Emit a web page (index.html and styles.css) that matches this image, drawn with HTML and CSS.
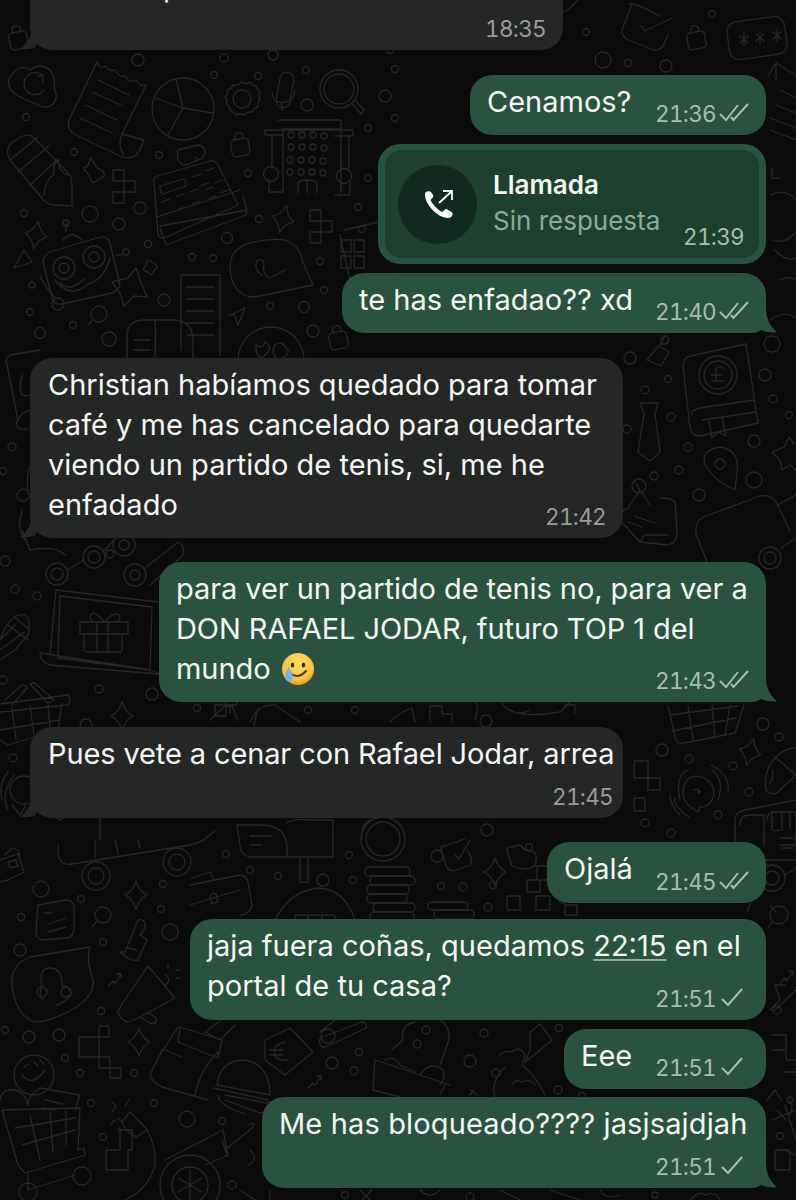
FILE: index.html
```html
<!DOCTYPE html>
<html lang="es">
  <head>
    <meta charset="utf-8" />
    <meta name="viewport" content="width=device-width, initial-scale=1" />
    <title>Chat</title>
    <link rel="stylesheet" href="styles.css">
  </head>

  <body>
    <!-- wallpaper doodles, free canvas behind the chat -->
    <svg class="doodles" width="796" height="1200" viewBox="0 0 796 1200" fill="none" stroke-linecap="round" stroke-linejoin="round">
      <defs>
        <path id="sparkle" d="M0 -14 Q3 -4 11 0 Q3 4 0 14 Q-3 4 -11 0 Q-3 -4 0 -14Z" />
        <g id="lock"><rect x="-9" y="-6" width="18" height="17" rx="4" /><path d="M-4 -6 V-10 A4.5 4.5 0 0 1 4 -10 V-6" /></g>
        <g id="squares"><path d="M0 0 h11 v11 h-11z M11 11 h11 v11 h-11z M11 22 h-11 v11 h11z" /></g>
        <path id="spark" d="M0 8 L5 3 L7 6 L13 -4 M9 -4 H13 V0" />
      </defs>

      <!-- small circles -->
      <g class="dots">
        <circle cx="138" cy="60" r="6" /><circle cx="224" cy="58" r="4" /><circle cx="273" cy="55" r="5" /><circle cx="214" cy="75" r="3.5" /><circle cx="258" cy="76" r="3.5" /><circle cx="306" cy="70" r="3.5" /><circle cx="395" cy="69" r="3.5" /><circle cx="307" cy="105" r="6" /><circle cx="385" cy="96" r="6" /><circle cx="26" cy="117" r="3.5" /><circle cx="368" cy="128" r="3.5" /><circle cx="74" cy="152" r="3.5" /><circle cx="159" cy="155" r="3.5" /><circle cx="248" cy="173" r="3.5" /><circle cx="368" cy="178" r="3.5" /><circle cx="140" cy="208" r="6" /><circle cx="90" cy="214" r="8" /><circle cx="24" cy="213" r="3.5" /><circle cx="119" cy="224" r="6" /><circle cx="259" cy="219" r="3.5" /><circle cx="358" cy="207" r="3.5" /><circle cx="227" cy="238" r="5.5" /><circle cx="148" cy="244" r="3.5" /><circle cx="192" cy="257" r="3.5" /><circle cx="213" cy="258" r="3.5" /><circle cx="320" cy="261" r="3.5" /><circle cx="324" cy="290" r="3.5" /><circle cx="270" cy="306" r="3.5" /><circle cx="304" cy="307" r="5.5" /><circle cx="164" cy="300" r="6" /><circle cx="73" cy="325" r="3.5" /><circle cx="30" cy="312" r="3.5" /><circle cx="40" cy="333" r="5.5" /><circle cx="109" cy="339" r="7" /><circle cx="313" cy="331" r="6" />
        <circle cx="586" cy="32" r="3.5" /><circle cx="603" cy="60" r="8" /><circle cx="628" cy="63" r="3.5" /><circle cx="666" cy="66" r="6" /><circle cx="712" cy="14" r="3.5" /><circle cx="390" cy="50" r="3.5" /><circle cx="395" cy="118" r="3.5" />
        <circle cx="630" cy="358" r="6" /><circle cx="668" cy="379" r="3.5" /><circle cx="645" cy="390" r="4" /><circle cx="671" cy="417" r="4" /><circle cx="627" cy="429" r="4" /><circle cx="688" cy="447" r="4" /><circle cx="679" cy="470" r="4" /><circle cx="654" cy="476" r="4" /><circle cx="699" cy="495" r="6" /><circle cx="765" cy="375" r="6" /><circle cx="773" cy="399" r="4" /><circle cx="789" cy="415" r="3.5" /><circle cx="754" cy="441" r="6" /><circle cx="754" cy="480" r="8" />
        <circle cx="12" cy="447" r="4" /><circle cx="3" cy="471" r="3.5" /><circle cx="23" cy="495" r="6" />
        <circle cx="110" cy="554" r="4" /><circle cx="5" cy="561" r="5" /><circle cx="15" cy="589" r="4" /><circle cx="37" cy="596" r="4" /><circle cx="99" cy="689" r="4" /><circle cx="152" cy="694" r="6" /><circle cx="86" cy="725" r="6" /><circle cx="3" cy="680" r="4" /><circle cx="13" cy="758" r="4" />
        <circle cx="197" cy="708" r="3.5" /><circle cx="308" cy="710" r="3.5" /><circle cx="355" cy="710" r="3.5" /><circle cx="486" cy="721" r="6" />
        <circle cx="226" cy="854" r="3.5" /><circle cx="349" cy="855" r="3.5" /><circle cx="250" cy="870" r="3.5" /><circle cx="278" cy="876" r="3.5" /><circle cx="323" cy="880" r="6" /><circle cx="353" cy="880" r="3.5" /><circle cx="437" cy="856" r="6" /><circle cx="441" cy="886" r="3.5" /><circle cx="493" cy="885" r="3.5" /><circle cx="463" cy="887" r="4" /><circle cx="487" cy="830" r="6" /><circle cx="529" cy="847" r="3.5" /><circle cx="488" cy="907" r="4" /><circle cx="563" cy="900" r="3.5" />
        <circle cx="662" cy="750" r="6" /><circle cx="689" cy="759" r="4" /><circle cx="733" cy="766" r="4" /><circle cx="779" cy="737" r="4" /><circle cx="763" cy="724" r="6" /><circle cx="749" cy="792" r="4" /><circle cx="718" cy="815" r="4" /><circle cx="645" cy="823" r="4" /><circle cx="671" cy="833" r="4" />
        <circle cx="41" cy="889" r="8" /><circle cx="81" cy="899" r="3.5" /><circle cx="21" cy="917" r="3.5" /><circle cx="163" cy="884" r="3.5" /><circle cx="161" cy="909" r="3.5" /><circle cx="103" cy="942" r="3.5" /><circle cx="20" cy="950" r="6" /><circle cx="170" cy="932" r="8" /><circle cx="101" cy="1011" r="3.5" /><circle cx="5" cy="1030" r="3.5" /><circle cx="29" cy="1037" r="6" /><circle cx="59" cy="1035" r="6" /><circle cx="65" cy="1058" r="3.5" /><circle cx="80" cy="1073" r="3.5" /><circle cx="134" cy="1073" r="3.5" /><circle cx="91" cy="1103" r="3.5" /><circle cx="103" cy="1137" r="3.5" /><circle cx="154" cy="1103" r="3.5" /><circle cx="187" cy="1119" r="8" /><circle cx="222" cy="1121" r="3.5" /><circle cx="232" cy="1185" r="4" />
        <circle cx="332" cy="1063" r="6" /><circle cx="354" cy="1071" r="4" /><circle cx="359" cy="1052" r="3.5" /><circle cx="470" cy="1061" r="6" /><circle cx="484" cy="1033" r="4" /><circle cx="496" cy="1073" r="4" /><circle cx="582" cy="1096" r="3.5" /><circle cx="558" cy="1090" r="4" /><circle cx="559" cy="1028" r="3.5" /><circle cx="777" cy="1010" r="4" /><circle cx="780" cy="1136" r="3.5" /><circle cx="790" cy="1100" r="3" />
      </g>

      <!-- cloud with refresh -->
      <path d="M12 91 Q4 82 14 72 Q22 64 30 70 Q40 62 50 70 Q56 78 54 88 Q60 100 50 106 Q44 109 36 104 L20 97 Q16 95 12 91Z M43 76 A11 11 0 1 0 44 90 M43 76 V83 M43 76 H37" />
      <!-- receipt -->
      <path d="M97 62 L70 118 Q65 129 76 135 L122 157 Q136 161 141 147 L144 140 L122 134 Q117 146 124 155 M146 85 L122 134 M97 62 Q100 70 105 66 Q110 72 115 70 Q120 78 125 76 Q130 84 136 80 Q140 87 146 85 M98 80 L129 95 M92 92 L123 106 M85 105 L117 120 M80 118 L112 133" />
      <!-- pie -->
      <circle cx="183" cy="109" r="31" /><path d="M183 108 L176 79 M183 108 L155 98 M183 108 L213 113 M183 108 L168 135" />
      <!-- gear -->
      <path d="M242 82 Q246 85 250 82 Q252 86 256 86 Q257 90 260 92 Q258 96 260 100 Q257 103 258 107 Q254 108 252 112 Q248 111 244 115 Q240 113 236 115 Q234 112 230 110 Q230 106 226 104 Q228 100 225 97 Q228 94 227 90 Q232 89 233 85 Q238 86 242 82Z" /><circle cx="242" cy="99" r="9" />
      <!-- mic -->
      <rect x="-7" y="-18" width="14" height="36" rx="7" transform="translate(285 90) rotate(10)" /><path d="M272 92 Q274 105 285 102 Q295 100 295 90 M282 102 L282 110" />
      <!-- magnifier -->
      <circle cx="339" cy="89" r="19" /><circle cx="339" cy="89" r="15" /><path d="M352 103 L361 114 Q364 112 364 110 L355 100" />
      <!-- hotel -->
      <path d="M283 193 V129 H341 V193 M278 122 Q278 120 280 120 H340 Q342 120 341 125 Q341 129 338 129 H283 M283 135 H265 V130 H353 V136 H335 M272 136 V168 M349 136 V168 M269 180 V192 H283 M350 180 V195 H335 M298 193 V182 Q306 178 317 182 V193 M307 180 V193" />
      <circle cx="271" cy="174" r="7.5" /><circle cx="344" cy="176" r="7.5" />
      <g class="dots">
        <circle cx="291" cy="135" r="3" /><circle cx="302" cy="135" r="3" /><circle cx="313" cy="135" r="3" /><circle cx="324" cy="136" r="3" /><circle cx="291" cy="147" r="3" /><circle cx="302" cy="147" r="3" /><circle cx="313" cy="147" r="3" /><circle cx="324" cy="148" r="3" /><circle cx="290" cy="160" r="3" /><circle cx="301" cy="160" r="3" /><circle cx="312" cy="160" r="3" /><circle cx="323" cy="161" r="3" /><circle cx="290" cy="172" r="3" /><circle cx="301" cy="172" r="3" /><circle cx="312" cy="172" r="3" /><circle cx="323" cy="173" r="3" />
      </g>
      <!-- pencil -->
      <path d="M10 160 Q4 150 12 142 L23 136 Q30 133 36 140 L70 175 Q72 178 72 190 L72 206 L54 205 Q46 204 42 198 L10 160Z M10 160 L38 137 M18 172 L50 145 M30 185 L58 159 M58 159 Q52 165 54 175 Q46 178 44 195 M70 175 Q60 176 58 159" />
      <!-- locks -->
      <use href="#lock" transform="translate(240 145) rotate(-8)" /><use href="#lock" transform="translate(18 38) rotate(-12)" /><use href="#lock" transform="translate(338 338) rotate(-10)" /><use href="#lock" transform="translate(696 38) rotate(-10)" />
      <!-- perfume bottle -->
      <path d="M90 158 Q94 162 97 168 Q106 172 104 176 L93 183 L88 174 Q84 170 84 168 Q90 166 90 158Z" />
      <use href="#squares" transform="translate(113 170)" />
      <use href="#squares" transform="translate(310 210)" />
      <!-- register -->
      <path d="M154 183 Q152 178 158 176 L210 161 Q216 160 218 165 L238 205 L164 238 Q158 238 158 234 Z M157 217 L240 190 M160 226 L247 210 M160 228 L166 245 L246 215 Q248 211 243 197 M198 161 L196 157 M178 150 L198 145 Q204 145 205 152 Q205 158 198 160 L186 165 Q180 165 178 159 Q177 153 178 150Z" />
      <path d="M160 186 L183 179 Q186 180 186 186 L163 194 Q160 193 160 186Z M192 177 l9 -3 M205 171 l9 -3 M200 186 l9 -3 M214 183 l8 -3 M161 202 l9 -3 M176 197 l8 -3 M190 192 l8 -3 M205 190 l8 -3 M220 193 l8 -3 M162 215 l9 -3 M177 210 l8 -3 M192 204 l8 -3 M208 199 l8 -3 M223 192 l8 -3" />
      <!-- sparkles -->
      <use href="#sparkle" transform="translate(36 235) rotate(10)" /><use href="#sparkle" transform="translate(283 219) rotate(15)" /><use href="#sparkle" transform="translate(122 716)" /><use href="#sparkle" transform="translate(495 872)" /><use href="#sparkle" transform="translate(750 752) rotate(15)" /><use href="#sparkle" transform="translate(136 895)" /><use href="#sparkle" transform="translate(139 1042)" />
      <!-- robot -->
      <path d="M43 262 Q43 256 50 252 L100 237 Q108 236 110 243 L120 285 Q118 290 112 293 L62 304 Q54 305 52 298 Z M63 240 Q72 230 82 240 M66 232 V224" />
      <circle cx="64" cy="268" r="11" /><circle cx="64" cy="268" r="5" /><circle cx="94" cy="257" r="11" /><circle cx="94" cy="257" r="5" /><circle cx="58" cy="304" r="6" /><circle cx="66" cy="223" r="3" /><circle cx="126" cy="252" r="3" /><circle cx="32" cy="285" r="3" />
      <path d="M55 280 Q70 300 88 284 Q104 280 110 258 M60 283 Q70 293 84 279 M40 276 Q44 285 55 298 M116 255 H122" />
      <!-- star, triangle -->
      <path d="M112 282 L128 278 L136 268 L140 280 L147 297 L134 296 L124 306 L120 293 Z M24 250 L32 262 L14 268 Z M152 262 Q146 258 146 266 Q140 270 148 272 Q152 278 154 270 Q160 268 155 264 Z" />
      <!-- document roll -->
      <path d="M181 350 V275 H220 V355 M187 287 H214 M187 299 H214 M187 311 H214 M187 323 H214 M187 335 H214 M127 358 V336 Q127 320 145 320 H175 Q195 322 193 345 V358 M155 320 Q156 330 155 358 M134 340 H150 M134 350 H150" />
      <!-- magnifier small -->
      <circle cx="99" cy="314" r="8" /><path d="M92 321 L88 325" />
      <!-- signature bubble -->
      <path d="M230 268 Q230 248 250 243 Q270 238 285 240 Q300 245 302 260 L313 285 L255 297 Q232 297 230 268Z M262 275 Q252 268 258 260 Q264 258 264 265 Q262 275 270 278 L285 270" />
      <!-- paper plane, coffee face -->
      <path d="M228 316 L245 308 L238 325 L234 314Z" />
      <circle cx="271" cy="360" r="33" /><path d="M256 345 Q262 350 265 342 Q272 346 268 352 L262 358 Q255 355 256 345Z M275 345 Q282 340 285 347 Q291 350 286 356 L278 360 Q270 354 275 345Z" />
      <!-- top right: envelope tick, password box -->
      <path d="M629 4 Q634 2 660 16 M632 4 L622 30 Q621 36 628 40 L654 50 Q660 50 663 46 L668 34 M641 26 L645 31 L672 18" />
      <path d="M578 0 L570 8 Q562 14 557 14 L548 18 Q544 18 542 14 V0" />
      <rect x="-29" y="-19" width="58" height="38" rx="10" transform="translate(757 38) rotate(-8)" />
      <path d="M740 36 l8 7 M748 36 l-8 7 M744 33 v13 M756 34 l8 7 M764 34 l-8 7 M760 31 v13 M773 32 l8 7 M781 32 l-8 7 M777 29 v13" />
      <path d="M768 76 L776 63 L784 68 L796 75 M776 63 V80 M780 90 L796 98 M776 105 L796 113 M770 118 L796 128" />
      <!-- strip beside the call bubble -->
      <circle cx="362" cy="229" r="3.5" />
      <path d="M345 230 L378 222 M340 235 L350 280" />
      <path d="M341 240 h10 v12 h-10z M354 240 h10 v12 h-10z M341 256 h10 v12 h-10z M354 256 h10 v12 h-10z" />
      <path d="M770 195 Q786 188 796 200 M772 240 Q785 245 796 232 M775 250 Q785 262 796 258 M780 280 Q790 275 796 280 M770 320 Q785 310 796 318" />
      <circle cx="772" cy="344" r="8" />
      <path d="M770 130 L796 140 M772 168 V178 H780" />
      <!-- pound book -->
      <path d="M683 366 Q683 358 690 356 L746 344 L758 423 L700 436 Q692 436 690 428 Z M692 415 Q690 410 700 408 L754 400 M702 420 L756 412 M709 421 L712 438 L718 432 L726 436 L722 417" />
      <circle cx="718" cy="375" r="19" /><circle cx="718" cy="375" r="14" />
      <path d="M724 369 Q720 364 716 369 V381 M711 375 H722 M712 381 H724" />
      <!-- tie -->
      <path d="M640 403 H658 L655 414 L660 452 L650 461 L638 452 L644 414 Z" />
      <!-- perfume -->
      <path d="M659 346 L665 336 M668 340 Q667 345 661 344 M655 350 L647 360 L661 366 L669 352 L659 346Z" />
      <circle cx="665" cy="340" r="4" />
      <!-- pin -->
      <path d="M720 447 Q740 450 737 472 L735 490 Q715 482 705 465 Q700 450 720 447Z" /><circle cx="720" cy="464" r="5" />
      <!-- star right -->
      <path d="M789 437 L794 444 L796 444 M789 437 L784 447 L772 452 L780 460 L782 470 L790 465 L796 470" />
      <!-- note with pin -->
      <path d="M640 490 L628 508 Q618 514 620 520 L640 542 L668 545 Q678 542 677 530 L675 502 Q672 498 660 498 M634 516 L655 523 M628 522 L642 527 M640 542 L644 535 L668 535 M635 482 L650 505" />
      <circle cx="639" cy="486" r="7" />
      <!-- big rounded card -->
      <path d="M707 562 L696 534 Q694 520 706 516 L760 496 Q772 494 778 505 L790 532 M776 506 L796 495 M781 548 L796 538" />
      <circle cx="770" cy="558" r="11" /><circle cx="770" cy="558" r="6" />
      <!-- left edge -->
      <path d="M40 350 L10 355 Q5 358 7 365 L18 420 M40 410 Q20 408 16 425 Q20 432 28 428 M30 395 Q16 400 22 375 M35 458 Q25 470 28 490" />
      <path d="M65 555 Q55 545 30 550 L22 530 M22 510 L20 520 Q18 530 25 540" />
      <!-- connected nodes -->
      <circle cx="57" cy="574" r="11" /><circle cx="57" cy="574" r="6" /><circle cx="94" cy="557" r="11" /><circle cx="94" cy="557" r="6" /><circle cx="124" cy="545" r="11" /><circle cx="124" cy="545" r="5" /><circle cx="135" cy="575" r="11" /><circle cx="135" cy="575" r="5" />
      <path d="M67 570 L84 560 M103 552 L114 540 M145 568 L178 542 Q185 545 183 555 L150 585" />
      <!-- laptop with gift -->
      <path d="M50 654 L56 590 L158 602 M60 596 L152 607 L150 670 L58 658 Z M40 653 L150 670 Q160 673 158 674 L50 665 Q40 662 40 653Z M88 660 Q95 665 112 664 L114 664" />
      <path d="M80 622 H128 V634 H80Z M84 634 V650 Q84 652 90 652 H118 Q122 652 122 650 V634 M97 622 V652 M108 622 V652 M104 622 Q92 606 90 618 Q90 622 97 622 M104 622 Q118 608 120 618 Q120 622 108 622" />
      <!-- flower basket left -->
      <path d="M0 640 Q10 612 25 615 Q32 620 28 635 L15 650 L0 660 M8 625 L28 640 M15 618 L28 628 M0 640 L15 625 M0 650 L24 632" />
      <!-- basket bottom left -->
      <path d="M0 704 L68 695 Q72 700 68 705 L0 712 M62 703 L58 730 L8 745 L0 740 M12 708 L16 740 M30 706 L34 735 M48 704 L50 730 M0 730 L60 720 M5 700 L22 685 Q25 684 27 688 L12 705 M30 684 Q33 682 36 684 L54 700 L48 703 Z" />
      <!-- radar ear left -->
      <circle cx="24" cy="790" r="14" /><path d="M8 810 Q0 795 14 775 M2 800 Q-2 785 8 772 M12 805 L20 815 L26 805 M55 815 Q60 825 65 815 H100 V840" />
      <!-- top of the cart -->
      <path d="M58 845 V856 Q62 866 72 864 L190 845 Q205 842 215 830 M95 840 V858 M115 840 L118 854 M138 840 L140 848" />
      <circle cx="96" cy="876" r="14" /><circle cx="96" cy="876" r="8" /><circle cx="177" cy="862" r="14" /><circle cx="177" cy="862" r="8" />
      <!-- briefcase small -->
      <path d="M0 860 L18 854 L24 872 L8 880 L0 882 M5 855 L12 848 L18 850 L20 856 M8 862 L16 860 L18 866 L10 868Z" />
      <!-- doc square -->
      <path d="M38 905 L66 900 Q72 900 74 906 L74 930 Q72 938 66 938 L42 940 Q36 938 36 932 Z M44 913 H52 M48 924 L66 918 M48 932 L66 927" />
      <!-- small magnifier -->
      <circle cx="103" cy="915" r="8" /><path d="M97 921 L92 927" />
      <!-- perfume 2 -->
      <path d="M125 952 L138 920 Q146 918 145 928 L140 935 L147 940 L138 960 Q130 962 120 952Z M128 948 L137 950" />
      <!-- headset bubble -->
      <path d="M12 985 Q10 965 30 957 L90 947 Q86 960 93 980 Q95 995 75 1008 Q50 1022 35 1022 Q15 1015 12 985Z M42 986 Q38 968 50 968 Q62 968 62 985 M42 986 Q38 995 43 1000 M62 986 Q70 985 71 995 Q62 1005 56 1005" />
      <circle cx="42" cy="992" r="5" /><circle cx="66" cy="992" r="5" />
      <!-- megaphone -->
      <path d="M122 1004 L148 966 L175 998 L140 1017 L128 1022 Q120 1020 118 1012 Z M140 1017 L150 1023 Q158 1025 156 1018 L148 1012 M165 975 Q173 980 165 985 M168 964 V968 M176 970 H180 M176 978 H180" />
      <use href="#spark" transform="translate(108 978)" /><use href="#spark" transform="translate(308 1080)" /><use href="#spark" transform="translate(780 975)" />
      <!-- squares -->
      <path d="M79 1037 H99 V1057 H79Z M99 1026 H109 V1037 H99Z M99 1057 H110 V1068 H99Z M110 1068 H121 V1078 H110Z" />
      <!-- bag -->
      <path d="M180 1027 L222 1040 L218 1058 L178 1042 Z M160 1055 L178 1027 M150 1075 L162 1050 M150 1075 Q152 1082 162 1087 L208 1100 M218 1052 Q200 1070 195 1095 M165 1050 L182 1057" />
      <!-- burger -->
      <path d="M217 1085 Q220 1060 245 1060 Q270 1065 270 1095 L217 1085Z M213 1088 L268 1100 Q270 1105 262 1102 L225 1095 M225 1100 L260 1113 Q270 1112 270 1105 M218 1095 Q218 1105 245 1114" />
      <!-- face and cart -->
      <circle cx="34" cy="1075" r="20" /><path d="M22 1075 Q32 1088 45 1070 M24 1067 L28 1064 M34 1062 L38 1066 M40 1060 L44 1064" />
      <path d="M0 1100 Q2 1088 15 1090 Q25 1092 28 1105 Q28 1095 40 1088 L80 1095 L75 1110 M2 1110 L80 1108 L78 1150 L84 1148 L85 1155 L25 1173 L18 1165 Z M15 1128 L75 1118 M22 1145 L75 1130 M30 1115 L40 1160 M50 1112 L53 1152 M66 1110 V1145 M45 1100 L63 1104 M42 1108 L55 1110 M28 1172 V1190 M28 1190 L75 1175" />
      <circle cx="28" cy="1192" r="9" /><circle cx="82" cy="1176" r="9" />
      <!-- plug -->
      <path d="M122 1122 L130 1112 L140 1122 L147 1130 L136 1137 L126 1130 Z M122 1122 L118 1118 M147 1130 Q156 1145 155 1165 Q148 1190 125 1200 M112 1112 L116 1106 L112 1102 M125 1106 L129 1100 M110 1125 L115 1120" />
      <path d="M106 1150 H120 V1128 M106 1150 V1170 H128 V1150 H132 V1130 H118" />
      <!-- vent fan -->
      <circle cx="190" cy="1185" r="30" /><circle cx="190" cy="1185" r="18" /><path d="M190 1170 V1200 M178 1178 L202 1192 M202 1178 L178 1192 M165 1160 L223 1130 L228 1155 L205 1165 M222 1140 Q225 1150 228 1155" />
      <path d="M248 1125 Q258 1120 252 1128 L225 1150 M250 1150 Q260 1160 248 1165" />
      <!-- middle strip, bits between bubbles -->
      <path d="M210 720 L225 706 H232 L238 720 M250 722 Q258 704 275 705 L300 722 M230 706 V713 M254 725 L258 708 M390 722 Q400 712 412 708 L415 722 M430 722 V706 H442 V714 L452 714 V722 M475 700 Q480 706 475 720 M510 710 Q520 716 530 710 M502 703 Q510 720 560 712 L570 702" />
      <path d="M565 705 h10 v8 M215 705 h11 v11 h-11z M226 695 h11 v10 h-11z" />
      <!-- chat + mailbox -->
      <path d="M237 825 H260 Q285 825 287 845 V857 H250 Q240 855 240 845 Z M250 836 H272 M250 845 H262 M287 823 Q295 818 310 820 H333 V857 H287 M300 857 V882 H308 V857" />
      <circle cx="383" cy="839" r="22" /><circle cx="383" cy="839" r="17" />
      <path d="M372 820 Q360 822 362 839" />
      <!-- coin stack -->
      <rect x="365" y="867" width="45" height="9" rx="4" /><rect x="370" y="876" width="45" height="9" rx="4" /><rect x="367" y="885" width="42" height="9" rx="4" /><rect x="367" y="894" width="40" height="9" rx="4" /><rect x="373" y="903" width="42" height="9" rx="4" /><rect x="370" y="912" width="44" height="9" rx="4" />
      <rect x="428" y="902" width="40" height="8" rx="4" /><rect x="434" y="910" width="40" height="9" rx="4" />
      <!-- tick box -->
      <path d="M445 846 L465 839 M441 850 Q440 846 445 846 M441 850 L447 868 Q450 872 456 870 L470 865 Q473 862 470 855 L467 850 M455 855 L459 859 L470 840" />
      <!-- folder -->
      <path d="M507 851 Q507 846 512 847 L520 845 L525 850 L534 852 Q538 855 535 866 Q525 872 512 866 Z" />
      <!-- squares -->
      <path d="M537 866 H550 V880 H537Z M527 880 H540 V892 H527Z M507 896 H520 V910 H507Z M536 896 H550 V910 H536Z M565 905 H577 V915 H565Z M634 761 H648 V778 H634Z M648 778 H660 V790 H648Z M634 798 H645 V811 H634Z" />
      <!-- fan bottom -->
      <path d="M275 920 Q290 890 320 888 Q345 890 355 920 M295 920 V915 H335 V920 M308 915 V920 M322 915 V920" />
      <!-- briefcase -->
      <path d="M190 885 L240 875 Q246 875 248 882 L252 905 Q250 915 240 915 M192 878 L210 872 L214 880 M190 905 L240 890 M210 896 Q212 892 216 894 L218 902 L212 904 Z" />
      <!-- basket up right -->
      <path d="M668 706 L676 740 Q678 744 684 743 L735 733 L744 705 M670 715 L738 706 M672 731 L736 718 M688 706 L693 740 M712 705 L715 737 M730 705 L725 735" />
      <!-- radar -->
      <path d="M698 812 L692 808 Q680 800 684 785 Q690 772 705 778 Q715 785 714 795 Q710 808 700 807 Z M694 790 Q698 788 700 792 M688 770 Q675 775 680 800 M675 798 Q672 805 690 818 M670 795 Q670 805 680 815 M712 770 Q725 780 718 800 M711 765 Q730 775 728 790" />
      <circle cx="699" cy="792" r="1" />
      <!-- taco -->
      <path d="M766 791 Q763 770 776 757 Q785 748 796 748 M775 757 Q790 770 796 775 M766 791 Q775 797 780 790 L796 775 M772 770 Q775 777 770 783" />
      <!-- shop -->
      <path d="M735 856 V820 Q735 812 745 810 L796 800 M740 825 Q740 815 750 815 H764 V845 M796 860 L740 860 L735 856 M767 820 Q767 812 775 812 H796 V845 H780 M772 812 V828 Q772 832 780 830 M782 812 V830 M790 812 V828 M780 838 H796 M782 848 H794" />
      <circle cx="772" cy="878" r="13" /><circle cx="772" cy="878" r="7" />
      <path d="M750 860 L770 866 M785 875 L796 868 M747 912 L752 900 M770 906 L776 912" />
      <circle cx="779" cy="915" r="9" /><path d="M772 922 L768 928" />
      <!-- lower right -->
      <path d="M775 1010 L796 990 M772 1035 H786 V1060 H796 M772 1050 H786 M785 1072 H796 M772 1120 L796 1110 M785 1105 L796 1140 M775 1150 H790 V1170 H775Z" />
      <!-- euro tag -->
      <path d="M235 1025 L220 1040 L205 1032 L234 1010 M265 1040 L290 1028 L313 1052 L285 1075 L265 1060 Z M285 1042 Q272 1045 275 1055 Q278 1062 287 1060 M270 1050 H283 M270 1055 H283" />
      <!-- safety tool -->
      <path d="M320 1038 L362 1022 Q368 1022 366 1028 L330 1045 Q318 1052 320 1038Z M335 1020 L320 1032" />
      <circle cx="328" cy="1036" r="7" />
      <!-- dog bowl -->
      <path d="M415 1022 Q400 1025 403 1040 L392 1050 M440 1020 Q455 1030 445 1050 L440 1065 M375 1060 L450 1085 M375 1060 L373 1090 L400 1097 M440 1095 L445 1085 M385 1060 Q395 1055 400 1065 L415 1072 M420 1075 Q430 1060 443 1070 Q446 1080 440 1085" />
      <circle cx="426" cy="1030" r="4" /><circle cx="417" cy="1044" r="4" />
      <!-- money bag + tag -->
      <path d="M500 1055 Q505 1050 512 1052 Q520 1045 525 1055 L522 1065 Q535 1075 545 1095 M505 1067 Q490 1082 495 1097 M512 1085 Q515 1078 522 1082 Q530 1078 535 1085 M525 1062 L540 1050 L552 1040 L540 1024 L530 1032 L530 1050 Z M470 1095 L474 1090 M478 1095 L470 1090" />
      <!-- below last bubble -->
      <path d="M240 1190 L255 1200 M270 1190 V1200 M360 1190 L370 1200 M372 1190 L362 1200 M420 1190 Q430 1200 440 1190 M500 1190 L520 1200 M550 1190 L580 1200 M600 1190 Q605 1200 620 1195 M690 1200 Q700 1190 705 1195 Q715 1190 720 1200" />
      <circle cx="345" cy="1195" r="3.5" /><circle cx="470" cy="1197" r="4" /><circle cx="655" cy="1195" r="3" />
      <path d="M784 1150 L796 1155 M790 1100 Q794 1105 790 1115" />
      <path d="M767 1100 L775 1090 L781 1100 M777 1110 L786 1120" />
      <path d="M770 1010 L780 1000 L775 985 L785 985" />
    </svg>

    <main class="chat">
      <div class="msg in w-top">
        <div class="text">Cuando puedas</div>
        <div class="meta">18:35</div>
        <svg class="tail" width="16" height="24" viewBox="0 0 16 24"><path d="M12 0 Q12 14 0 23 Q9 24 16 21 L16 0Z" /></svg>
      </div>

      <div class="msg out row w-cenamos">
        <div class="text">Cenamos?</div>
        <div class="meta">21:36 <svg class="ticks" width="30" height="20" viewBox="0 0 30 20"><path d="M1 11 L7 17 L19 2 M12 14 L14.5 17 L29 1" /></svg></div>
      </div>

      <div class="msg call w-call">
        <div class="call-inner">
          <div class="call-icon">
            <svg width="32" height="32" viewBox="0 0 32 32"><path class="handset" d="M5 3.5 Q3 3.6 3 7 Q3.2 14 10.5 22 Q18 29.5 25.5 30 Q29.6 30.2 30.6 26.5 Q31 25 29.5 24 L25 21.2 Q23.7 20.6 22.6 21.8 L20.8 23.6 Q20 24.3 19 23.6 Q15.6 21.4 12.6 18 Q10 15 8.9 12.8 Q8.4 11.8 9.3 11 L10.8 9.4 Q11.8 8.2 11.2 7 L8.4 3.6 Q7 2.9 5 3.5Z" /><path class="arrow" d="M17 15 L30 3 M21 3 H30 V12" /></svg>
          </div>
          <div class="call-info">
            <div class="call-title">Llamada</div>
            <div class="call-sub">Sin respuesta</div>
          </div>
          <div class="meta call-time">21:39</div>
        </div>
      </div>

      <div class="msg out row w-enfadao tailed">
        <div class="text">te has enfadao?? xd</div>
        <div class="meta">21:40 <svg class="ticks" width="30" height="20" viewBox="0 0 30 20"><path d="M1 11 L7 17 L19 2 M12 14 L14.5 17 L29 1" /></svg></div>
        <svg class="tail" width="16" height="24" viewBox="0 0 16 24"><path d="M5 0 Q5 14 16 23.5 Q6 24 0 21 L0 0Z" /></svg>
      </div>

      <div class="msg in w-christian">
        <div class="text">Christian habíamos quedado para tomar<br>café y me has cancelado para quedarte<br>viendo un partido de tenis, si, me he<br>enfadado</div>
        <div class="meta meta-over">21:42</div>
        <svg class="tail" width="16" height="24" viewBox="0 0 16 24"><path d="M12 0 Q12 14 0 23 Q9 24 16 21 L16 0Z" /></svg>
      </div>

      <div class="msg out w-partido tailed">
        <div class="text">para ver un partido de tenis no, para ver a<br>DON RAFAEL JODAR, futuro TOP 1 del<br>mundo <svg class="emoji" width="34" height="34" viewBox="0 0 34 34"><defs><radialGradient id="face" cx="50%" cy="35%" r="70%"><stop offset="0" stop-color="#ffe06a" /><stop offset=".7" stop-color="#fbbf3e" /><stop offset="1" stop-color="#e8872a" /></radialGradient></defs><circle cx="17" cy="17" r="16" fill="url(#face)" /><ellipse cx="11.5" cy="13" rx="1.8" ry="2.5" fill="#4a2a12" /><ellipse cx="22.5" cy="13" rx="1.8" ry="2.5" fill="#4a2a12" /><path d="M10 22 Q18 27 25 19" stroke="#5a3214" stroke-width="2" fill="none" stroke-linecap="round" /><path d="M8 15 Q12 22 12 26 A4.2 4.2 0 0 1 4 26 Q4 21 8 15Z" fill="#6fb7e8" /></svg></div>
        <div class="meta meta-over">21:43 <svg class="ticks" width="30" height="20" viewBox="0 0 30 20"><path d="M1 11 L7 17 L19 2 M12 14 L14.5 17 L29 1" /></svg></div>
        <svg class="tail" width="16" height="24" viewBox="0 0 16 24"><path d="M5 0 Q5 14 16 23.5 Q6 24 0 21 L0 0Z" /></svg>
      </div>

      <div class="msg in w-pues">
        <div class="text">Pues vete a cenar con Rafael Jodar, arrea</div>
        <div class="meta">21:45</div>
        <svg class="tail" width="16" height="24" viewBox="0 0 16 24"><path d="M12 0 Q12 14 0 23 Q9 24 16 21 L16 0Z" /></svg>
      </div>

      <div class="msg out row w-ojala">
        <div class="text">Ojalá</div>
        <div class="meta">21:45 <svg class="ticks" width="30" height="20" viewBox="0 0 30 20"><path d="M1 11 L7 17 L19 2 M12 14 L14.5 17 L29 1" /></svg></div>
      </div>

      <div class="msg out w-jaja">
        <div class="text">jaja fuera coñas, quedamos <span class="link">22:15</span> en el<br>portal de tu casa?</div>
        <div class="meta meta-over">21:51 <svg class="ticks" width="30" height="20" viewBox="0 0 30 20"><path d="M3 11 L9 17 L23 1" /></svg></div>
      </div>

      <div class="msg out row w-eee">
        <div class="text">Eee</div>
        <div class="meta">21:51 <svg class="ticks" width="30" height="20" viewBox="0 0 30 20"><path d="M3 11 L9 17 L23 1" /></svg></div>
      </div>

      <div class="msg out w-bloqueado tailed">
        <div class="text">Me has bloqueado???? jasjsajdjah</div>
        <div class="meta">21:51 <svg class="ticks" width="30" height="20" viewBox="0 0 30 20"><path d="M3 11 L9 17 L23 1" /></svg></div>
        <svg class="tail" width="16" height="24" viewBox="0 0 16 24"><path d="M5 0 Q5 14 16 23.5 Q6 24 0 21 L0 0Z" /></svg>
      </div>
    </main>
  </body>
</html>
```

FILE: styles.css
```css
html,
body {
  margin: 0;
  height: 1200px;
  overflow: hidden;
  background-color: #0b0b0b;
}

body {
  position: relative;
  font-family: Inter, "Liberation Sans", sans-serif;
  color: #f4f6f4;
}

.doodles {
  position: absolute;
  top: 0;
  left: 0;
  stroke: #282828;
  stroke-width: 1.3;
}

.chat {
  position: relative;
  display: flex;
  flex-direction: column;
  align-items: flex-end;
  padding: 0 30px;
  margin-top: -40px;
  gap: 9px;
}

.msg {
  position: relative;
  box-sizing: border-box;
  display: flex;
  flex-direction: column;
  padding: 7px 17px;
  border-radius: 22px;
  white-space: nowrap;
}

.msg.out {
  background-color: #2a5240;
  align-self: flex-end;
}

.msg.in {
  background-color: #252626;
  align-self: flex-start;
  padding-left: 18px;
}

.msg.row {
  flex-direction: row;
  justify-content: space-between;
}

.text {
  font-size: 29px;
  line-height: 40px;
}

.meta {
  display: flex;
  align-items: center;
  justify-content: flex-end;
  gap: 3px;
  height: 30px;
  margin-top: auto;
  font-size: 22.5px;
  font-variant-numeric: tabular-nums;
  letter-spacing: -0.7px;
  color: #a6bdb0;
}

.msg.in .meta {
  color: #9a9b9b;
}

.msg.row .meta {
  align-self: flex-end;
}

/* timestamp shares the last line of the text */
.meta-over {
  margin-top: -24px;
}

.w-jaja .meta-over {
  margin-top: -23px;
}

.ticks {
  fill: none;
  stroke: #a6bdb0;
  stroke-width: 2;
}

.tail {
  position: absolute;
  bottom: 0;
}

.msg.in .tail {
  left: -10px;
  fill: #252626;
}

.msg.out .tail {
  right: -11px;
  fill: #2a5240;
}

.tailed {
  border-bottom-right-radius: 14px;
}

.emoji {
  vertical-align: -7px;
  margin-left: 2px;
}

.link {
  text-decoration: underline;
  text-decoration-color: #8fae9e;
  text-decoration-thickness: 1.5px;
  text-underline-offset: 3px;
}

/* bubble sizes, and the gaps that differ from the usual 9px */
.w-top { width: 533px; height: 90px; border-top-left-radius: 0; border-top-right-radius: 0; }
.w-cenamos { width: 296px; height: 60px; margin-top: 16px; }
.w-call { width: 388px; height: 120px; }
.w-enfadao { width: 424px; height: 60px; }
.w-christian { width: 593px; height: 180px; margin-top: 16px; }
.w-partido { width: 607px; height: 140px; margin-top: 15px; }
.w-pues { width: 593px; height: 91px; margin-top: 16px; }
.w-ojala { width: 219px; height: 61px; margin-top: 15px; }
.w-jaja { width: 576px; height: 101px; margin-top: 7px; }
.w-eee { width: 202px; height: 60px; }
.w-bloqueado { width: 504px; height: 91px; margin-top: -1px; }

/* small tracking so the long lines end where they do in the chat */
.w-partido .text { letter-spacing: -0.07px; }
.w-pues .text { letter-spacing: -0.12px; }
.w-bloqueado .text { letter-spacing: 0.15px; }
.msg.w-pues { padding-right: 10px; }

/* call card */
.call {
  padding: 6px 7px;
  background-color: #2a5240;
  align-self: flex-end;
}

.call-inner {
  display: flex;
  align-items: center;
  height: 100%;
  padding: 0 15px 0 13px;
  background-color: #1f3f2f;
  border-radius: 17px;
}

.call-icon {
  display: flex;
  align-items: center;
  justify-content: center;
  flex: none;
  width: 79px;
  height: 79px;
  border-radius: 50%;
  background-color: #12291f;
}

.handset {
  fill: #fff;
}

.arrow {
  fill: none;
  stroke: #fff;
  stroke-width: 1.8;
}

.call-info {
  margin-left: 16px;
  margin-top: -2px;
}

.call-title {
  font-size: 26px;
  font-weight: 600;
  line-height: 36px;
}

.call-sub {
  font-size: 26px;
  line-height: 36px;
  color: #8fa99b;
}

.meta.call-time {
  align-self: flex-end;
  margin: 0 0 7px auto;
}
```
